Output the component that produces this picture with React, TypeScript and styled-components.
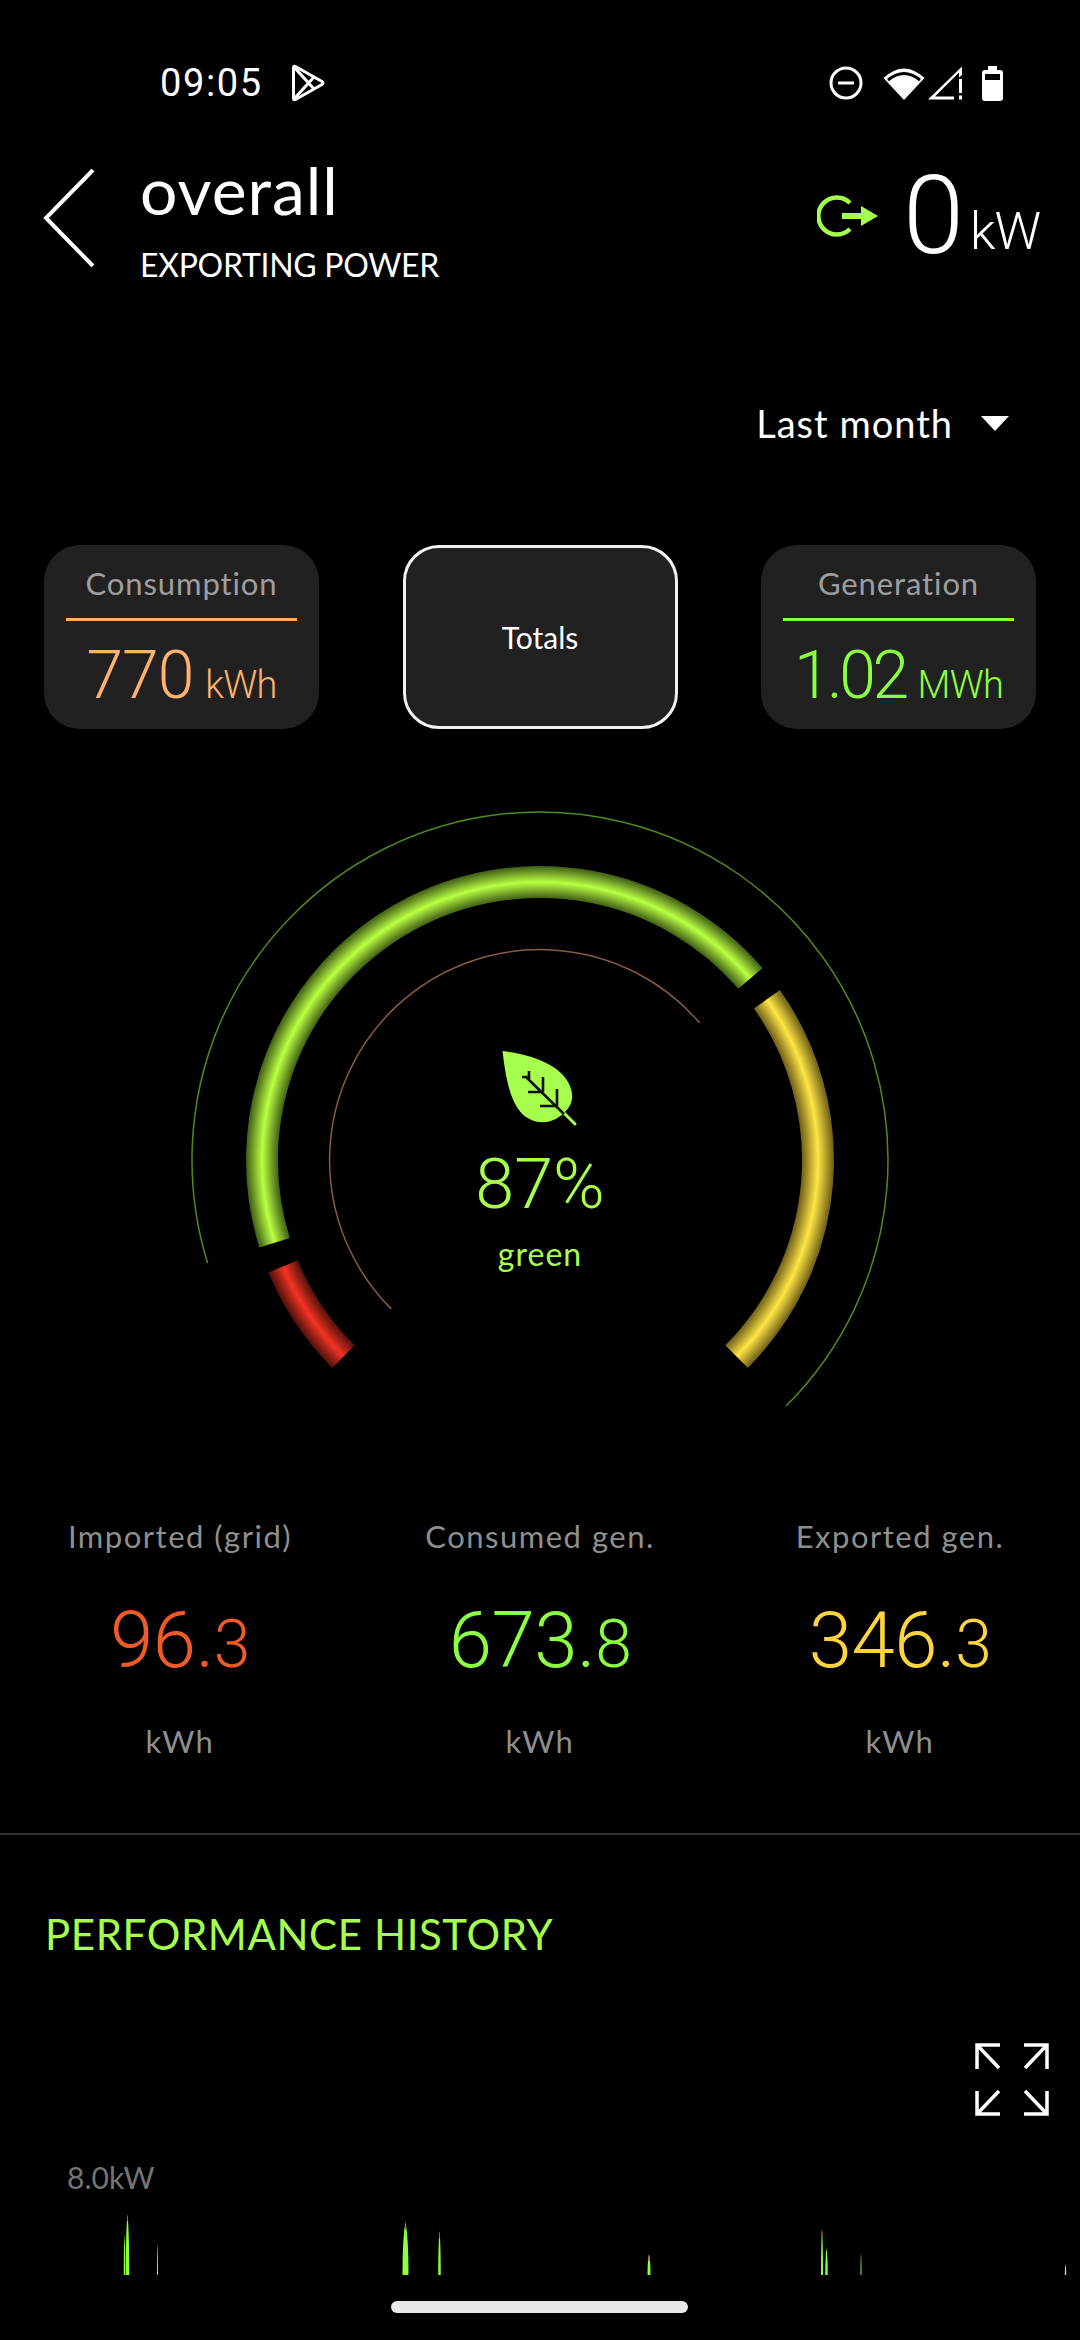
import React, { FC } from "react";
import styled, { createGlobalStyle } from "styled-components";

const GREEN = "#a6ff4d";
const LIME = "#8cff40";
const ORANGE = "#ffb26b";
const FONT = '"Lato", "Noto Sans", sans-serif';
const NUMBER_FONT = 'Roboto, "Noto Sans", sans-serif';

const GAUGE_CX = 360;
const GAUGE_CY = 360;

// angle is clockwise from the top of the gauge
const arcPath = (r: number, from: number, to: number) => {
  const point = (deg: number) => {
    const rad = (deg * Math.PI) / 180;
    return `${(GAUGE_CX + r * Math.sin(rad)).toFixed(2)} ${(GAUGE_CY - r * Math.cos(rad)).toFixed(2)}`;
  };
  const large = to - from > 180 ? 1 : 0;
  return `M${point(from)} A${r} ${r} 0 ${large} 1 ${point(to)}`;
};

const SPIKES = [
  { x: 124.5, w: 1.5, top: 2233, tip: false },
  { x: 127.5, w: 3.5, top: 2213, tip: true },
  { x: 157.5, w: 1, top: 2242, tip: false },
  { x: 405.5, w: 6, top: 2221, tip: true },
  { x: 439.5, w: 2.5, top: 2230, tip: true },
  { x: 649, w: 3, top: 2253, tip: true },
  { x: 822, w: 2, top: 2228, tip: true },
  { x: 826.5, w: 2.5, top: 2247, tip: false },
  { x: 861, w: 1, top: 2252, tip: false },
  { x: 1065.5, w: 1.5, top: 2263, tip: false },
];

const CHART_TOP = 2200;
const CHART_BASE = 2274;

const spikePath = (x: number, w: number, top: number) => {
  const ctrl = top + (CHART_BASE - top) * 0.3;
  return `M${x - w / 2} ${CHART_BASE} Q${x - w / 2} ${ctrl} ${x} ${top} Q${x + w / 2} ${ctrl} ${x + w / 2} ${CHART_BASE} Z`;
};

const STATS = [
  { label: "Imported (grid)", whole: "96.", part: "3", color: "#f05a28" },
  { label: "Consumed gen.", whole: "673.", part: "8", color: LIME },
  { label: "Exported gen.", whole: "346.", part: "3", color: "#ffd43f" },
];

const GaugeStops: FC<{ id: string; edge: string; peak: string }> = ({ id, edge, peak }) => (
  <radialGradient id={id} gradientUnits="userSpaceOnUse" cx={GAUGE_CX} cy={GAUGE_CY} r={294} fx={GAUGE_CX} fy={GAUGE_CY}>
    <stop offset="0.89" stopColor={edge} />
    <stop offset="0.945" stopColor={peak} />
    <stop offset="1" stopColor={edge} />
  </radialGradient>
);

const App: FC = () => (
  <Screen>
    <GlobalStyle />

    <StatusBar>
      <StatusLeft>
        <Clock>09:05</Clock>
        <svg width="34" height="38" viewBox="0 0 34 38" fill="none" stroke="#fff" strokeWidth="3" strokeLinejoin="round">
          <path d="M2.5 3.5 Q2.5 1.5 4.5 2.5 L31 17.5 Q33 19 31 20.5 L4.5 35.5 Q2.5 36.5 2.5 34.5 Z" />
          <path d="M3 3 L23 25 M3 35 L23 13" />
        </svg>
      </StatusLeft>
      <StatusRight>
        <svg width="34" height="34" viewBox="0 0 34 34" fill="none" stroke="#fff" strokeWidth="3">
          <circle cx="17" cy="17" r="15" />
          <path d="M9 17 H25" />
        </svg>
        <SignalGroup>
          <svg width="42" height="33" viewBox="0 0 42 33">
            <path d="M0.5 11 Q21 -8 41.5 11 L21 33 Z" fill="#fff" />
            <path d="M5 13 Q21 0 37 13" fill="none" stroke="#000" strokeWidth="3" />
          </svg>
          <svg width="34" height="34" viewBox="0 0 34 34" fill="#fff">
            <path d="M0 33.5 L34 0.5 V9 L31 11.5 V6.5 L7 30.5 H26 V33.5 Z" />
            <rect x="31" y="13" width="3" height="14" />
            <rect x="31" y="29.5" width="3" height="4" />
          </svg>
        </SignalGroup>
        <svg width="21" height="35" viewBox="0 0 21 35" fill="#fff">
          <path d="M6 0 H15 V4 H18 Q21 4 21 7 V32 Q21 35 18 35 H3 Q0 35 0 32 V7 Q0 4 3 4 H6 Z" />
          <rect x="3" y="8" width="15" height="6" fill="#000" />
        </svg>
      </StatusRight>
    </StatusBar>

    <Header>
      <BackIcon width="52" height="98" viewBox="0 0 52 98" fill="none" stroke="#fff" strokeWidth="4">
        <path d="M50 1 L3 49 L50 97" />
      </BackIcon>
      <TitleBlock>
        <PageTitle>overall</PageTitle>
        <PageSubtitle>EXPORTING POWER</PageSubtitle>
      </TitleBlock>
      <PowerBlock>
        <svg width="62" height="42" viewBox="0 0 62 42" fill="none">
          <path d="M33 8 A18.5 18.5 0 1 0 33 34" stroke={GREEN} strokeWidth="4.5" />
          <path d="M25 18 H44 V11 L61 21 L44 31 V24 H25 Z" fill={GREEN} />
        </svg>
        <PowerValue>0</PowerValue>
        <PowerUnit>kW</PowerUnit>
      </PowerBlock>
    </Header>

    <RangeRow>
      <RangeLabel>Last month</RangeLabel>
      <svg width="28" height="15" viewBox="0 0 28 15" fill="#fff">
        <path d="M0 0 H28 L14 15 Z" />
      </svg>
    </RangeRow>

    <CardRow>
      <Card>
        <CardLabel>Consumption</CardLabel>
        <CardRule $color={ORANGE} />
        <CardValue $color={ORANGE}>
          770<CardUnit>kWh</CardUnit>
        </CardValue>
      </Card>
      <Card $active>
        <TotalsLabel>Totals</TotalsLabel>
      </Card>
      <Card>
        <CardLabel>Generation</CardLabel>
        <CardRule $color={LIME} />
        <CardValue $color={LIME} $tight>
          1.02<CardUnit>MWh</CardUnit>
        </CardValue>
      </Card>
    </CardRow>

    <Gauge>
      <svg width="720" height="620" viewBox="0 0 720 620" fill="none">
        <defs>
          <GaugeStops id="gaugeGreen" edge="#3f5c16" peak="#baff42" />
          <GaugeStops id="gaugeYellow" edge="#6b5c18" peak="#ffe544" />
          <GaugeStops id="gaugeRed" edge="#4d100b" peak="#f43322" />
        </defs>
        <path d={arcPath(348, -107.2, 135)} stroke="#4d8a1f" strokeWidth="1.5" />
        <path d={arcPath(210.5, -135, 49.4)} stroke="#8a5c3e" strokeWidth="1.5" />
        <path d={arcPath(278, -107.3, 49.2)} stroke="url(#gaugeGreen)" strokeWidth="32" />
        <path d={arcPath(278, 54.7, 135)} stroke="url(#gaugeYellow)" strokeWidth="32" />
        <path d={arcPath(278, -135, -112.5)} stroke="url(#gaugeRed)" strokeWidth="32" />
      </svg>
      <GaugeCenter>
        <svg width="76" height="76" viewBox="0 0 76 76" fill="none">
          <path d="M0.5 0 C28 3 56 13 66 31 C73 44 71 53 62 62 C50 73 36 74 24 66 C9 55 4 30 0.5 0 Z" fill={GREEN} />
          <path d="M62 62 L73 73" stroke={GREEN} strokeWidth="3" strokeLinecap="round" />
          <path
            d="M62 63 L24 26 M27 20 V28 M20 26 H26 M41 26 V41 M26 41 H41 M55 38 V55 M38 55 H55"
            stroke="#0b0f05"
            strokeWidth="2.6"
          />
        </svg>
        <GaugePercent>87%</GaugePercent>
        <GaugeCaption>green</GaugeCaption>
      </GaugeCenter>
    </Gauge>

    <StatsGrid>
      {STATS.map((stat) => (
        <StatColumn key={stat.label}>
          <StatLabel>{stat.label}</StatLabel>
          <StatValue $color={stat.color}>
            {stat.whole}
            <StatDecimal>{stat.part}</StatDecimal>
          </StatValue>
          <StatLabel>kWh</StatLabel>
        </StatColumn>
      ))}
    </StatsGrid>

    <Divider />

    <SectionTitle>PERFORMANCE HISTORY</SectionTitle>

    <ExpandRow>
      <svg width="74" height="73" viewBox="0 0 74 73" fill="none" stroke="#fff" strokeWidth="3.5">
        <path d="M25 2 H2 V26 M2 2 L24 25" />
        <path d="M49 2 H72 V26 M72 2 L50 25" />
        <path d="M2 48 V71 H25 M2 71 L24 48" />
        <path d="M72 48 V71 H49 M72 71 L50 48" />
      </svg>
    </ExpandRow>

    <ChartAxisLabel>8.0kW</ChartAxisLabel>

    <ChartArea>
      <svg width="1080" height={CHART_BASE - CHART_TOP} viewBox={`0 ${CHART_TOP} 1080 ${CHART_BASE - CHART_TOP}`}>
        {SPIKES.map((s) => (
          <g key={s.x}>
            <path d={spikePath(s.x, s.w, s.top)} fill={LIME} />
            {s.tip && <path d={`M${s.x - 0.6} ${s.top + 7} L${s.x} ${s.top} L${s.x + 0.6} ${s.top + 7} Z`} fill="#f0402a" />}
          </g>
        ))}
      </svg>
    </ChartArea>

    <HomePill />
  </Screen>
);

const GlobalStyle = createGlobalStyle`
  html, body {
    margin: 0;
    padding: 0;
    background: #000;
  }
`;

const Screen = styled.div`
  position: relative;
  width: 1080px;
  height: 2340px;
  overflow: hidden;
  background: #000;
  color: #fff;
  font-family: ${FONT};
`;

const StatusBar = styled.div`
  height: 166px;
  display: flex;
  justify-content: space-between;
  align-items: center;
  padding: 0 77px 0 160px;
  box-sizing: border-box;
`;

const StatusLeft = styled.div`
  display: flex;
  align-items: center;
  gap: 28px;
`;

const Clock = styled.span`
  font-family: Roboto, sans-serif;
  font-size: 38px;
  font-weight: 400;
  letter-spacing: 1.6px;
`;

const StatusRight = styled.div`
  display: flex;
  align-items: center;
  gap: 20px;
`;

const SignalGroup = styled.div`
  display: flex;
  align-items: center;
  gap: 3px;
`;

const Header = styled.div`
  height: 114px;
  display: flex;
  align-items: flex-start;
  padding: 0 40px 0 43px;
`;

const BackIcon = styled.svg`
  margin-top: 3px;
  flex: none;
`;

const TitleBlock = styled.div`
  margin-left: 45px;
  display: flex;
  flex-direction: column;
`;

const PageTitle = styled.div`
  font-size: 66px;
  line-height: 48px;
  letter-spacing: 1px;
`;

const PageSubtitle = styled.div`
  margin-top: 35px;
  font-size: 32px;
  line-height: 32px;
  letter-spacing: -0.3px;
`;

const PowerBlock = styled.div`
  margin-left: auto;
  display: flex;
  align-items: center;
  font-family: ${NUMBER_FONT};
`;

const PowerValue = styled.span`
  margin-left: 24px;
  font-size: 110px;
  font-weight: 300;
  line-height: 100px;
`;

const PowerUnit = styled.span`
  margin: 32px 0 0 6px;
  font-size: 52px;
  font-weight: 300;
  line-height: 60px;
  letter-spacing: -1px;
`;

const RangeRow = styled.div`
  height: 60px;
  margin-top: 113px;
  display: flex;
  justify-content: flex-end;
  align-items: center;
  gap: 28px;
  padding-right: 71px;
`;

const RangeLabel = styled.span`
  font-size: 38px;
  letter-spacing: 1px;
`;

const CardRow = styled.div`
  margin-top: 92px;
  display: flex;
  justify-content: space-between;
  padding: 0 44px;
`;

const Card = styled.div<{ $active?: boolean }>`
  width: 275px;
  height: 184px;
  box-sizing: border-box;
  border-radius: 36px;
  background: #212121;
  border: ${(p) => (p.$active ? "3px solid #f2f2f2" : "none")};
  display: flex;
  flex-direction: column;
  align-items: center;
  justify-content: ${(p) => (p.$active ? "center" : "flex-start")};
  padding-top: ${(p) => (p.$active ? "0" : "18px")};
`;

const CardLabel = styled.div`
  font-size: 31px;
  line-height: 40px;
  color: #9e9e9e;
  letter-spacing: 0.9px;
`;

const CardRule = styled.div<{ $color: string }>`
  width: 231px;
  height: 3px;
  margin-top: 15px;
  background: ${(p) => p.$color};
`;

const CardValue = styled.div<{ $color: string; $tight?: boolean }>`
  margin-top: 20px;
  font-family: ${NUMBER_FONT};
  font-size: 66px;
  font-weight: 300;
  line-height: 70px;
  letter-spacing: ${(p) => (p.$tight ? "-3.5px" : "-1px")};
  color: ${(p) => p.$color};
  white-space: nowrap;
`;

const CardUnit = styled.span`
  margin-left: 12px;
  font-size: 38px;
  font-weight: 300;
  letter-spacing: -0.8px;
`;

const TotalsLabel = styled.div`
  font-size: 30px;
  line-height: 36px;
`;

const Gauge = styled.div`
  position: relative;
  width: 720px;
  height: 620px;
  margin: 71px auto 0;
`;

const GaugeCenter = styled.div`
  position: absolute;
  top: 251px;
  left: 0;
  right: 0;
  display: flex;
  flex-direction: column;
  align-items: center;
`;

const GaugePercent = styled.div`
  margin-top: 22px;
  font-family: ${NUMBER_FONT};
  font-size: 70px;
  font-weight: 300;
  line-height: 70px;
  color: ${GREEN};
`;

const GaugeCaption = styled.div`
  margin-top: 15px;
  font-size: 32px;
  line-height: 40px;
  color: ${GREEN};
  letter-spacing: 1px;
`;

const StatsGrid = styled.div`
  margin-top: 96px;
  display: grid;
  grid-template-columns: repeat(3, 360px);
`;

const StatColumn = styled.div`
  display: flex;
  flex-direction: column;
  align-items: center;
`;

const StatLabel = styled.div`
  font-size: 31px;
  line-height: 40px;
  color: #8f8f8f;
  letter-spacing: 1.5px;
`;

const StatValue = styled.div<{ $color: string }>`
  margin: 40px 0 31px;
  font-family: ${NUMBER_FONT};
  font-size: 78px;
  font-weight: 300;
  line-height: 90px;
  letter-spacing: -0.5px;
  color: ${(p) => p.$color};
`;

const StatDecimal = styled.span`
  font-size: 66px;
`;

const Divider = styled.div`
  height: 2px;
  margin-top: 72px;
  background: #333;
`;

const SectionTitle = styled.div`
  margin: 74px 0 0 45px;
  font-size: 42px;
  line-height: 50px;
  color: ${GREEN};
  letter-spacing: 0.6px;
`;

const ExpandRow = styled.div`
  margin-top: 84px;
  display: flex;
  justify-content: flex-end;
  padding-right: 31px;
`;

const ChartAxisLabel = styled.div`
  margin: 43px 0 0 67px;
  font-size: 30px;
  line-height: 36px;
  color: #757575;
`;

const ChartArea = styled.div`
  margin-top: 6px;
  display: flex;
`;

const HomePill = styled.div`
  position: absolute;
  left: 391px;
  top: 2301px;
  width: 297px;
  height: 12px;
  border-radius: 6px;
  background: #e8e8e8;
`;

export default App;
